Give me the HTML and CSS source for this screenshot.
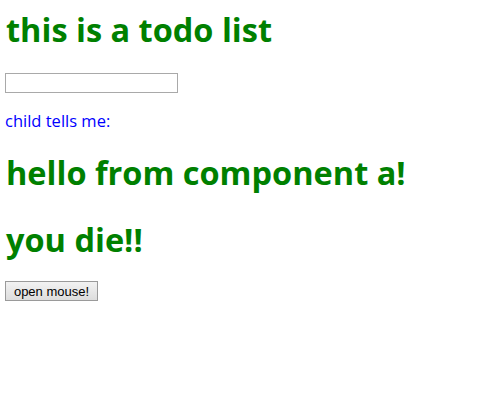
FILE: index.html
```html
<!DOCTYPE html>
<html>
<head>
<meta charset="utf-8">
<link rel="stylesheet" href="styles.css">
</head>
<body>
<div class="app">
  <h1 class="title title-main">this is a todo list</h1>
  <input class="todo-input" type="text">
  <p class="child-msg">child tells me:</p>
  <h1 class="title title-hello">hello from component a!</h1>
  <h1 class="title title-die">you die!!</h1>
  <button class="mouse-btn">open mouse!</button>
</div>
</body>
</html>
```

FILE: styles.css
```css
html, body {
  margin: 0;
  padding: 0;
  background: #fff;
}
.app {
  padding: 0 5px;
  display: flex;
  flex-direction: column;
  align-items: flex-start;
  font-family: "Open Sans", "Noto Sans", sans-serif;
}
.title {
  color: #008000;
  font-size: 32.5px;
  font-weight: 700;
  line-height: 42px;
  margin: 0;
  margin-left: 1px;
}
.title-main {
  margin-top: 9px;
  margin-bottom: 22px;
}
.title-hello {
  margin-bottom: 25px;
}
.title-die {
  margin-bottom: 20px;
}
.todo-input {
  width: 173px;
  height: 20px;
  box-sizing: border-box;
  border: 1px solid #a9a9a9;
  margin: 0 0 17px;
  padding: 1px 2px;
}
.child-msg {
  color: #0000ff;
  font-size: 16.5px;
  line-height: 21px;
  margin: 0 0 21px;
}
.mouse-btn {
  font-family: "Liberation Sans", Arial, sans-serif;
  font-size: 13px;
  height: 20px;
  width: 93px;
  padding: 0 4px;
  border: 1px solid #9a9a9a;
  border-radius: 0;
  background: linear-gradient(#f2f2f2, #dddddd);
  color: #000;
}
```
